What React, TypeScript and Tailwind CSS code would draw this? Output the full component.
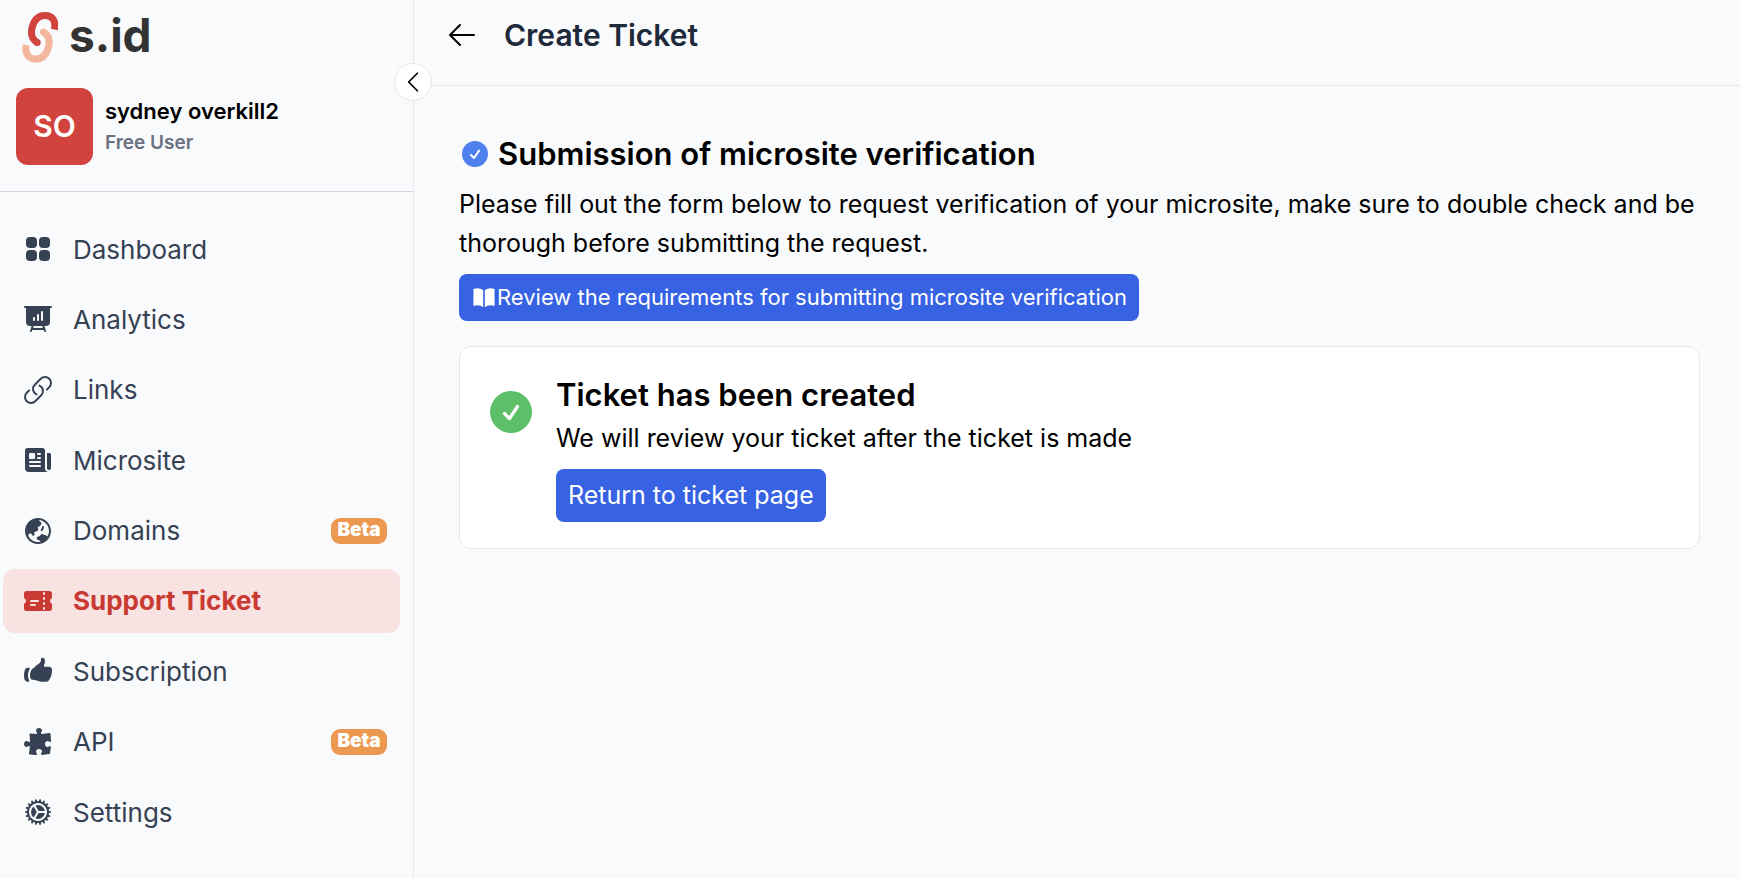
import {
  HiBookOpen,
  HiCog,
  HiGlobeAsiaAustralia,
  HiHandThumbUp,
  HiNewspaper,
  HiOutlineArrowLeft,
  HiOutlineChevronLeft,
  HiOutlineLink,
  HiPresentationChartBar,
  HiPuzzlePiece,
  HiTicket,
} from "react-icons/hi2";

function SquaresIcon({ className }: { className?: string }) {
  return (
    <svg viewBox="0 0 32 32" fill="currentColor" className={className}>
      <rect x="4" y="4" width="11" height="11" rx="4" />
      <rect x="17" y="4" width="11" height="11" rx="4" />
      <rect x="4" y="17" width="11" height="11" rx="4" />
      <rect x="17" y="17" width="11" height="11" rx="4" />
    </svg>
  );
}

const navItems = [
  { label: "Dashboard", icon: SquaresIcon },
  { label: "Analytics", icon: HiPresentationChartBar },
  { label: "Links", icon: HiOutlineLink },
  { label: "Microsite", icon: HiNewspaper },
  { label: "Domains", icon: HiGlobeAsiaAustralia, beta: true },
  { label: "Support Ticket", icon: HiTicket, active: true },
  { label: "Subscription", icon: HiHandThumbUp },
  { label: "API", icon: HiPuzzlePiece, beta: true },
  { label: "Settings", icon: HiCog },
];

// One chain link of the logo; the second one is the same shape turned around.
function LogoLink({ color, transform }: { color: string; transform?: string }) {
  return (
    <g transform={transform}>
      <path
        d="M32.300 18.500C34.200 10 30.500 4.400 23 4.400C16 4.400 12.300 9 10.400 15.500C8.300 22.500 9.500 28 15.200 31.500"
        fill="none"
        stroke={color}
        strokeWidth="7"
      />
      <circle cx="15.200" cy="31.500" r="3.500" fill={color} />
    </g>
  );
}

function Logo() {
  return (
    <a href="#home" aria-label="s.id home" className="flex h-[74px] items-center gap-[11px] pl-[22px]">
      <svg viewBox="0 0 36 52" className="h-[52px] w-9">
        <LogoLink color="#f4b69c" transform="rotate(180 18.3 26.2)" />
        <LogoLink color="#d1443d" />
      </svg>
      <span className="pb-1 text-[46px] leading-none font-bold text-[#333333]">s.id</span>
    </a>
  );
}

function CheckBadge({ className }: { className: string }) {
  return (
    <svg viewBox="0 0 42 42" className={className} aria-hidden="true">
      <circle cx="21" cy="21" r="21" fill="currentColor" />
      <path
        d="M14.500 22.500l5 5 8-12"
        fill="none"
        stroke="white"
        strokeWidth="3.200"
        strokeLinecap="round"
        strokeLinejoin="round"
      />
    </svg>
  );
}

function Sidebar() {
  return (
    <aside className="relative w-[414px] shrink-0 border-r border-gray-200">
      <Logo />
      <div className="flex items-center gap-3 border-b border-gray-300 px-4 pt-[14px] pb-[26px]">
        <div className="flex size-[77px] items-center justify-center rounded-xl bg-[#d1443d] text-[30px] font-semibold text-white">
          SO
        </div>
        <div>
          <p className="text-[22px] leading-8 font-semibold text-black">sydney overkill2</p>
          <p className="text-[19px] leading-8 font-semibold text-gray-500">Free User</p>
        </div>
      </div>
      <nav className="flex min-h-[652px] flex-col justify-between pt-[25px] pr-[13px] pl-[3px]">
        {navItems.map(({ label, icon: Icon, beta, active }) => (
          <a
            key={label}
            href={`#${label.toLowerCase().replace(" ", "-")}`}
            aria-current={active ? "page" : undefined}
            className={`flex h-16 items-center rounded-xl pr-[13px] pl-[19px] text-[26px] ${
              active ? "bg-[#f9e2e2] font-bold text-[#c93a32]" : "text-gray-700"
            }`}
          >
            <Icon className="size-8" />
            <span className="ml-[19px] grow">{label}</span>
            {beta && (
              <span className="flex h-[26px] w-14 items-center justify-center rounded-[9px] bg-[#ec9850] text-[19px] font-black text-white">
                Beta
              </span>
            )}
          </a>
        ))}
      </nav>
      <button
        type="button"
        aria-label="Collapse sidebar"
        className="absolute top-[63px] -right-[19px] flex size-[38px] items-center justify-center rounded-full border border-gray-200 bg-white text-black"
      >
        <HiOutlineChevronLeft className="size-7" />
      </button>
    </aside>
  );
}

export default function App() {
  return (
    <div className="flex min-h-screen bg-[#f9fafc] font-[Inter,sans-serif] text-black">
      <Sidebar />
      <div className="min-w-0 grow">
        <header className="flex h-[86px] items-center gap-[26px] border-b border-gray-200 pb-[15px] pl-8">
          <button type="button" aria-label="Go back">
            <HiOutlineArrowLeft className="size-8" />
          </button>
          <h1 className="text-[30px] font-semibold text-gray-800">Create Ticket</h1>
        </header>
        <main className="pt-12 pr-10 pl-[45px]">
          <div className="flex items-center gap-[10px] pl-[3px]">
            <CheckBadge className="size-[26px] text-[#4f80ee]" />
            <h2 className="text-[31px] leading-10 font-semibold">Submission of microsite verification</h2>
          </div>
          <p className="mt-[11px] text-[25px] leading-[39px]">
            Please fill out the form below to request verification of your microsite, make sure to double check and be
            thorough before submitting the request.
          </p>
          <a
            href="#requirements"
            className="mt-[11px] inline-flex h-[47px] items-center rounded-lg bg-[#3662e3] px-3 text-[22px] text-white"
          >
            <HiBookOpen className="size-[26px]" />
            Review the requirements for submitting microsite verification
          </a>
          <section className="mt-[25px] flex gap-6 rounded-xl border border-gray-200 bg-white px-[30px] pt-7 pb-[26px]">
            <CheckBadge className="mt-4 size-[42px] shrink-0 text-[#5dc068]" />
            <div>
              <h2 className="text-[31px] leading-10 font-semibold">Ticket has been created</h2>
              <p className="mt-1 text-[25px] leading-[39px]">We will review your ticket after the ticket is made</p>
              <button type="button" className="mt-[11px] h-[53px] rounded-lg bg-[#3662e3] px-3 text-[25px] text-white">
                Return to ticket page
              </button>
            </div>
          </section>
        </main>
      </div>
    </div>
  );
}
